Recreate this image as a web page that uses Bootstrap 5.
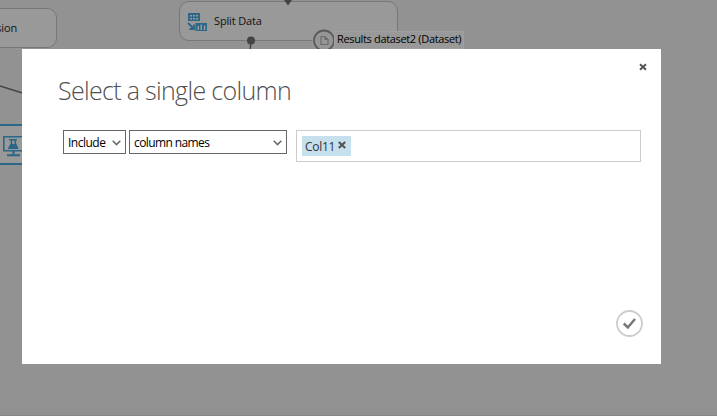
<!DOCTYPE html>
<html lang="en">
<head>
<meta charset="utf-8">
<meta name="viewport" content="width=device-width, initial-scale=1">
<title>Select a single column</title>
<link href="https://cdn.jsdelivr.net/npm/bootstrap@5.3.0/dist/css/bootstrap.min.css" rel="stylesheet">
<style>
body{font-family:"Segoe UI","Open Sans","Noto Sans",sans-serif;font-size:12px;line-height:16px;background:#929292;color:#000;height:416px}
.workspace{height:416px;background:#929292;border-bottom:1px solid #888}
.wires{left:0;top:0}
.node{background:#999;border:1px solid #777;border-radius:10px;color:#111;font-size:11px;letter-spacing:-.15px}
.node-left{left:-120px;top:8px;width:177px;height:40px;padding-right:39px}
.node-split{left:179px;top:1px;width:219px;height:40px;padding-left:7px}
.node-split svg{margin-top:2px}
.node-split-name{margin-left:6px}
.node-active{left:-6px;top:124px;width:120px;height:41px;border:2px solid #2b6788;border-radius:6px}
.port-label{left:334px;top:31px;width:130px;height:18px;background:#999;border:1px solid #a0a0a0;font-size:11px;padding-left:2px;line-height:14px;letter-spacing:-.34px;white-space:nowrap}
.dialog-box{margin:49px 0 0 22px;width:639px;height:315px;background:#fff;padding:25px 20px 26px 37px;z-index:2}
.dialog-title{font-size:25px;font-weight:300;line-height:32px;color:#505050;letter-spacing:-.68px;margin:0 0 24px -1px}
.close-x{right:14px;top:14px;width:8px;height:8px}
.picker{width:63px;height:24px;border:1px solid #666;border-radius:0;padding:1px 4px 0;font-size:12px;color:#000;background:#fff;letter-spacing:-.5px}
.picker-wide{width:158px;margin-left:3px}
.picker-wide span{letter-spacing:-.65px;letter-spacing:-.6px}
.tokens{width:345px;height:32px;border:1px solid #ccc;margin-left:9px;padding-left:5px}
.token{height:20px;width:49px;background:#c7e0ee;color:#333;padding:1px 0 0 3px;letter-spacing:-.3px}
.token svg{margin:-3px 0 0 3px}
.accept{width:27px;height:27px;margin:0 -2px 1px 0}
</style>
<script src="https://cdn.jsdelivr.net/npm/bootstrap@5.3.0/dist/js/bootstrap.bundle.min.js"></script>
</head>
<body class="overflow-hidden">
<div class="workspace position-relative overflow-hidden">
  <div class="node node-left position-absolute d-flex align-items-center justify-content-end"><span>sion</span></div>
  <div class="node node-split position-absolute d-flex align-items-center">
    <svg width="21" height="20" viewBox="0 0 21 20" fill="none"><path fill="#2b6788" d="M1 1h12v8H1zM8.500 11H20v8H8.500z"/><path fill="#999" d="M3 3h2v1.500H3zM6 3h2v1.500H6zM9 3h2v1.500H9zM3 6h2v1.500H3zM6 6h2v1.500H6zM9 6h2v1.500H9zM10.500 14H12v4h-1.500zM13.500 12.500H15V18h-1.500zM16.800 13.500h1.500V18h-1.500z"/><path stroke="#2b6788" stroke-width="1.900" d="M1 11l6 6M7 12.500V17H2.500"/></svg>
    <span class="node-split-name">Split Data</span>
  </div>
  <div class="node node-active position-absolute"></div>
  <svg class="wires position-absolute" width="717" height="416" fill="none">
    <path fill="#444" d="M284 0h8l-4 5.500z"/>
    <path stroke="#444" stroke-width="1.500" d="M251 40l-1 12M0 86l32 10"/>
    <circle cx="251" cy="40.500" r="4" fill="#444"/>
    <circle cx="324" cy="40.500" r="11.800" fill="#999"/>
    <circle cx="324" cy="40.500" r="10" fill="#969696" stroke="#5a5a5a" stroke-width="1.800"/>
    <path stroke="#6c6c6c" stroke-width="1.200" d="M321 36.500h4l3 3v5h-7zM325 36.500v3h3"/>
    <g stroke="#2b6788"><path stroke-width="1.600" d="M3.800 136.800h20v14h-20z"/><path stroke-width="2" d="M13.500 151v4M7 155.200h13"/><path fill="#2b6788" d="M10.500 144.500h5.500l1.500 3.500h-8.500z"/><path stroke-width="1.500" d="M9 139.700h8M11.500 139.500v4l-2.500 4.800h8.500l-2.200-4.800v-4"/></g>
  </svg>
  <div class="port-label position-absolute">Results dataset2 (Dataset)</div>

  <main class="dialog-box position-relative d-flex flex-column" role="dialog" aria-labelledby="dialogTitle">
    <svg class="close-x position-absolute" viewBox="0 0 8 8" stroke="#555" stroke-width="2"><path d="M1 1.200l6 5.600M7 1.200l-6 5.600"/></svg>
    <h1 class="dialog-title" id="dialogTitle">Select a single column</h1>
    <div class="d-flex align-items-start ps-1">
      <div class="picker d-flex align-items-center justify-content-between"><span>Include</span><svg width="9" height="6" fill="none" stroke="#666" stroke-width="1.500"><path d="M.7.8l3.800 3.800L8.300.8"/></svg></div>
      <div class="picker picker-wide d-flex align-items-center justify-content-between"><span>column names</span><svg width="9" height="6" fill="none" stroke="#666" stroke-width="1.500"><path d="M.7.8l3.800 3.800L8.300.8"/></svg></div>
      <div class="tokens d-flex align-items-center"><div class="token d-flex align-items-center"><span>Col11</span><svg width="8" height="8" stroke="#555" stroke-width="2.200"><path d="M.8 1l6.400 6M7.200 1L.8 7"/></svg></div></div>
    </div>
    <svg class="accept mt-auto align-self-end" viewBox="0 0 27 27" fill="none"><circle cx="13.500" cy="13.500" r="12.500" stroke="#ccc" stroke-width="1.800"/><path stroke="#777" stroke-width="2.500" d="M7.800 13.500l4 4L19 9"/></svg>
  </main>
</div>
</body>
</html>
